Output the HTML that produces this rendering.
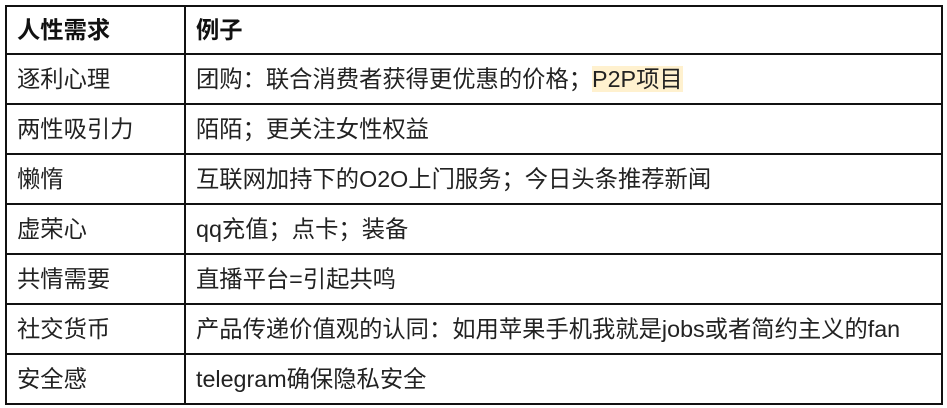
<!DOCTYPE html>
<html><head><meta charset="utf-8"><style>
html,body{margin:0;padding:0;background:#fff;width:947px;height:408px;overflow:hidden}
table{position:absolute;left:5px;top:5px;width:938px;border-collapse:collapse;font-family:"Liberation Sans","Noto Sans CJK SC",sans-serif;font-size:23.3px;color:#222}
tr{height:50px}
tr.h{height:48px}
td,th{border:2px solid #111;padding:0 0 0 10px;text-align:left;white-space:nowrap;line-height:26px}
th{font-weight:bold;color:#111}
td:first-child,th:first-child{width:167px}
.hl{background:#fff1cf}
</style></head><body>
<table>
<tr class="h"><th>人性需求</th><th>例子</th></tr>
<tr><td>逐利心理</td><td>团购：联合消费者获得更优惠的价格；<span class="hl">P2P项目</span></td></tr>
<tr><td>两性吸引力</td><td>陌陌；更关注女性权益</td></tr>
<tr><td>懒惰</td><td>互联网加持下的O2O上门服务；今日头条推荐新闻</td></tr>
<tr><td>虚荣心</td><td>qq充值；点卡；装备</td></tr>
<tr><td>共情需要</td><td>直播平台=引起共鸣</td></tr>
<tr><td>社交货币</td><td>产品传递价值观的认同：如用苹果手机我就是jobs或者简约主义的fan</td></tr>
<tr><td>安全感</td><td>telegram确保隐私安全</td></tr>
</table>
</body></html>
